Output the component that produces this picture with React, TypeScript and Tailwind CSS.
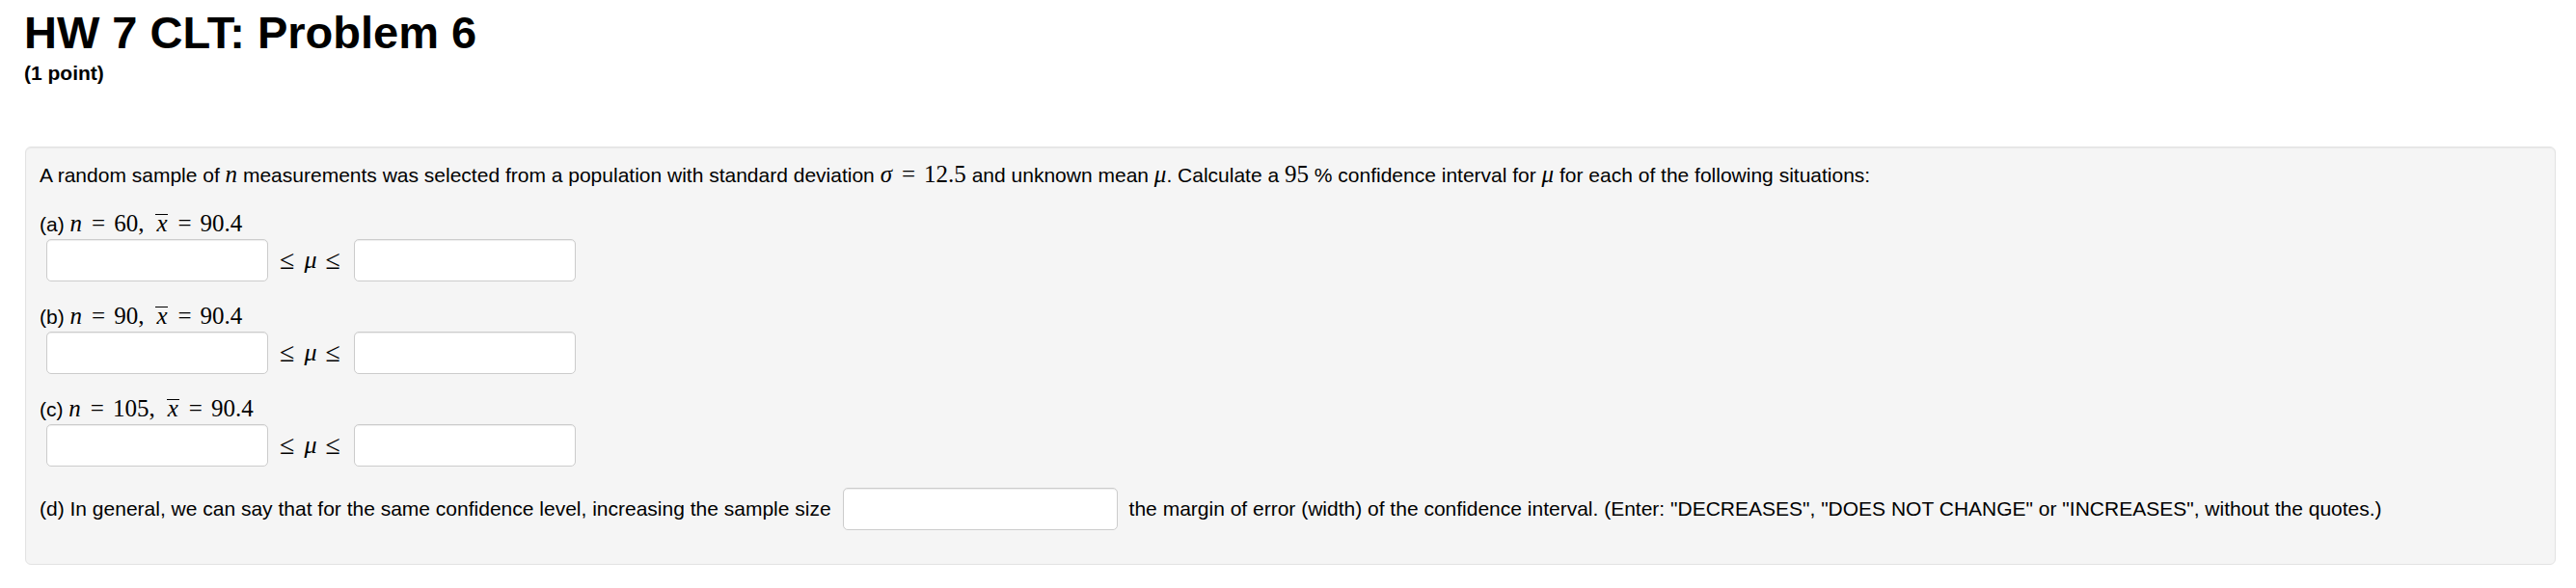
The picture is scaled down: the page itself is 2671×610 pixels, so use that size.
import React from "react";

const M = ({ children, className = "" }: { children: React.ReactNode; className?: string }) => (
  <span className={"font-['Liberation_Serif',serif] text-[25px] leading-none " + className}>{children}</span>
);

const I = ({ children }: { children: React.ReactNode }) => (
  <span className="font-['Liberation_Serif',serif] text-[25px] leading-none italic">{children}</span>
);

const Eq = () => (
  <span className="font-['Liberation_Serif',serif] text-[25px] leading-none ml-[10px] mr-[9px]">=</span>
);

const XBar = () => (
  <span className="font-['Liberation_Serif',serif] text-[25px] italic inline-block border-t border-black leading-[18px] px-[1px]">
    x
  </span>
);

const Field = ({ w }: { w: string }) => (
  <input
    type="text"
    className={
      "h-[44px] rounded-[5px] border border-[#cccccc] bg-white shadow-[inset_0_1px_1px_rgba(0,0,0,0.075)] outline-none " + w
    }
  />
);

const Part = ({ label, n }: { label: string; n: string }) => (
  <>
    <div className="h-[30px] leading-[30px] whitespace-nowrap">
      {label} <I>n</I>
      <Eq />
      <M>{n}</M>
      <M>,</M>
      <span className="ml-[12px]" />
      <XBar />
      <Eq />
      <M>90.4</M>
    </div>
    <div className="flex h-[44px] items-center">
      <div className="ml-[7px]">
        <Field w="w-[230px]" />
      </div>
      <div className="ml-[12px] flex items-center font-['Liberation_Serif',serif] leading-none">
        <span className="text-[28px]">≤</span>
        <span className="ml-[10px] text-[26px] italic">μ</span>
        <span className="ml-[9px] text-[28px]">≤</span>
      </div>
      <div className="ml-[14px]">
        <Field w="w-[230px]" />
      </div>
    </div>
  </>
);

export default function App() {
  return (
    <div className="min-h-screen bg-white text-black font-['Liberation_Sans',Arial,sans-serif]">
      <div className="pl-[25px] pt-[11px]">
        <h1 className="text-[47px] leading-[46px] font-bold">HW 7 CLT: Problem 6</h1>
        <div className="mt-[9px] text-[21px] leading-[19px] font-bold">(1 point)</div>
      </div>
      <div className="ml-[26px] mr-[21px] mt-[67px] rounded-[6px] border border-[#e3e3e3] bg-[#f5f5f5] shadow-[inset_0_1px_1px_rgba(0,0,0,0.05)] pl-[14px] pt-[14px] pb-[35px] text-[21px]">
        <div className="h-[30px] leading-[30px] whitespace-nowrap">
          A random sample of <I>n</I> measurements was selected from a population with standard deviation{" "}
          <I>σ</I>
          <Eq />
          <M>12.5</M> and unknown mean <I>μ</I>. Calculate a <M>95</M> % confidence interval for <I>μ</I> for each
          of the following situations:
        </div>
        <div className="mt-[21px]">
          <Part label="(a)" n="60" />
        </div>
        <div className="mt-[22px]">
          <Part label="(b)" n="90" />
        </div>
        <div className="mt-[22px]">
          <Part label="(c)" n="105" />
        </div>
        <div className="mt-[22px] flex h-[44px] items-center whitespace-nowrap">
          <span className="leading-[30px]">
            (d) In general, we can say that for the same confidence level, increasing the sample size
          </span>
          <div className="mx-[12px]">
            <Field w="w-[285px]" />
          </div>
          <span className="leading-[30px]">
            the margin of error (width) of the confidence interval. (Enter: "DECREASES", "DOES NOT CHANGE" or
            "INCREASES", without the quotes.)
          </span>
        </div>
      </div>
    </div>
  );
}
